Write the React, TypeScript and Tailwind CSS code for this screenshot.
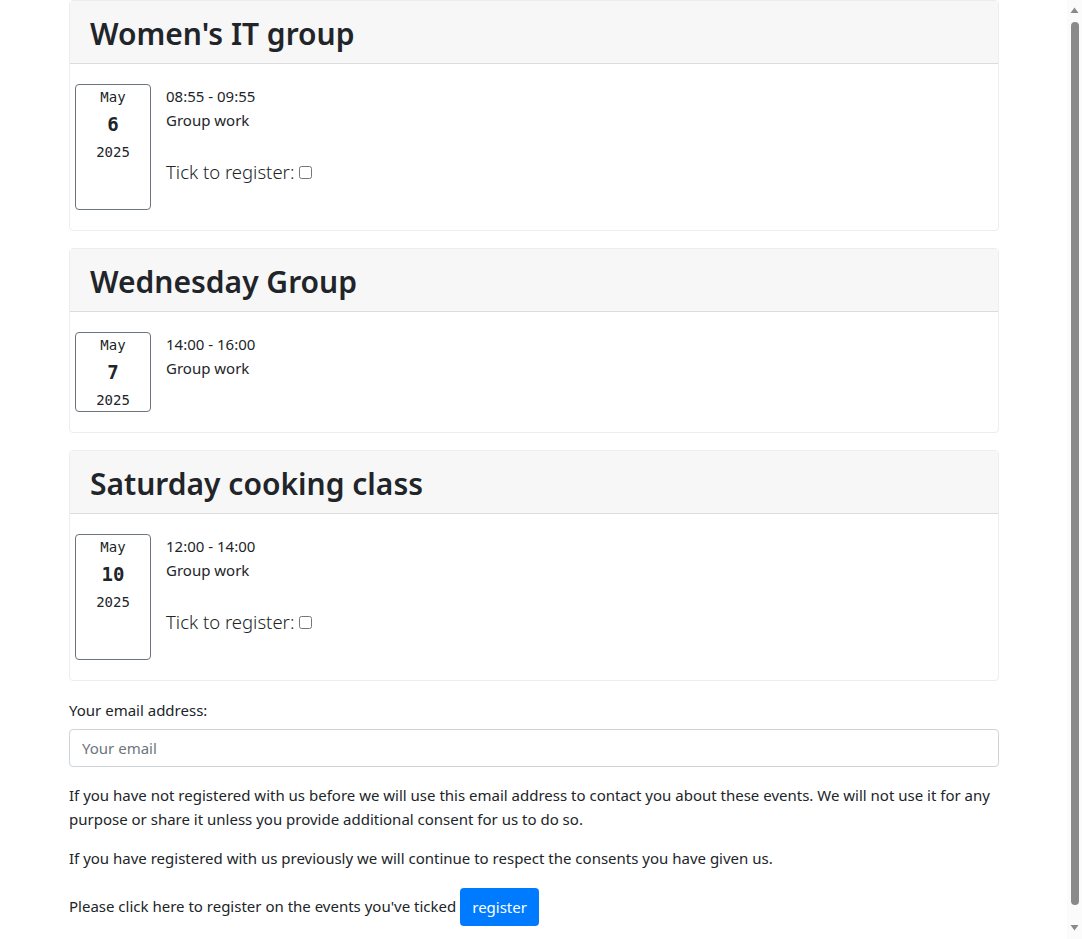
import React from "react";

type Ev = { title: string; month: string; day: string; year: string; time: string; desc: string; tick: boolean };

const events: Ev[] = [
  { title: "Women's IT group", month: "May", day: "6", year: "2025", time: "08:55 - 09:55", desc: "Group work", tick: true },
  { title: "Wednesday Group", month: "May", day: "7", year: "2025", time: "14:00 - 16:00", desc: "Group work", tick: false },
  { title: "Saturday cooking class", month: "May", day: "10", year: "2025", time: "12:00 - 14:00", desc: "Group work", tick: true },
];

function Card({ ev }: { ev: Ev }) {
  return (
    <div className="mb-[17px] rounded-[4px] border border-[#ededed] bg-white">
      <div className="h-[63px] border-b border-[#dcdcdc] bg-[#f7f7f7] px-[20px] pt-[14px]">
        <h2 className="text-[30px] font-semibold leading-[38px] text-[#212529]">{ev.title}</h2>
      </div>
      <div className="flex pb-[20px] pl-[5px] pt-[20px]">
        <div className="flex min-h-[80px] w-[76px] shrink-0 flex-col items-center rounded-[4px] border border-[#6c757d] pt-[2px] font-['DejaVu_Sans_Mono',monospace] text-[#212529]">
          <div className="text-[14px] leading-[20px]">{ev.month}</div>
          <div className="text-[19px] font-bold leading-[34px]">{ev.day}</div>
          <div className="text-[14px] leading-[22px]">{ev.year}</div>
        </div>
        <div className="ml-[15px] flex flex-col text-[15px] leading-[24px] text-[#212529]">
          <div>{ev.time}</div>
          <div>{ev.desc}</div>
          {ev.tick && (
            <div className="mt-[25px] mb-[23px] flex items-center text-[18.5px] font-light leading-[30px]">
              Tick to register:
              <input type="checkbox" className="ml-[5px] h-[13px] w-[13px]" />
            </div>
          )}
        </div>
      </div>
    </div>
  );
}

function FakeScrollbar() {
  return (
    <div className="fixed right-0 top-0 flex h-[939px] w-[15px] flex-col items-center bg-[#fbfbfb]">
      <svg width="9" height="7" viewBox="0 0 9 7" className="mt-[7px]">
        <polygon points="4.5,0.5 8.5,6 0.5,6" fill="#8a8a8a" />
      </svg>
      <div className="mt-[8px] h-[883px] w-[8px] rounded-full bg-[#8a8a8a]" />
      <svg width="9" height="7" viewBox="0 0 9 7" className="mt-[19px]">
        <polygon points="0.5,1 8.5,1 4.5,6.5" fill="#8a8a8a" />
      </svg>
    </div>
  );
}

export default function App() {
  return (
    <div className="min-h-[980px] bg-white font-['Noto_Sans',sans-serif] text-[15px] text-[#212529]">
      <div className="ml-[69px] w-[930px]">
        {events.map((ev) => (
          <Card key={ev.title} ev={ev} />
        ))}
        <div>
          <label className="block leading-[24px]">Your email address:</label>
          <input
            type="text"
            placeholder="Your email"
            className="mt-[7px] block h-[38px] w-full rounded-[4px] border border-[#ced4da] px-[12px] text-[15px] placeholder:text-[#6c757d]"
          />
          <p className="mt-[16px] leading-[24px]">
            If you have not registered with us before we will use this email address to contact you about these events. We will not use it for any
            <br />
            purpose or share it unless you provide additional consent for us to do so.
          </p>
          <p className="mt-[15px] leading-[24px]">
            If you have registered with us previously we will continue to respect the consents you have given us.
          </p>
          <p className="mt-[16px] flex items-center leading-[24px]">
            Please click here to register on the events you've ticked
            <button className="ml-[4px] mt-[2px] h-[38px] rounded-[4px] bg-[#007bff] px-[12px] text-[15px] text-white">register</button>
          </p>
        </div>
      </div>
      <FakeScrollbar />
    </div>
  );
}
